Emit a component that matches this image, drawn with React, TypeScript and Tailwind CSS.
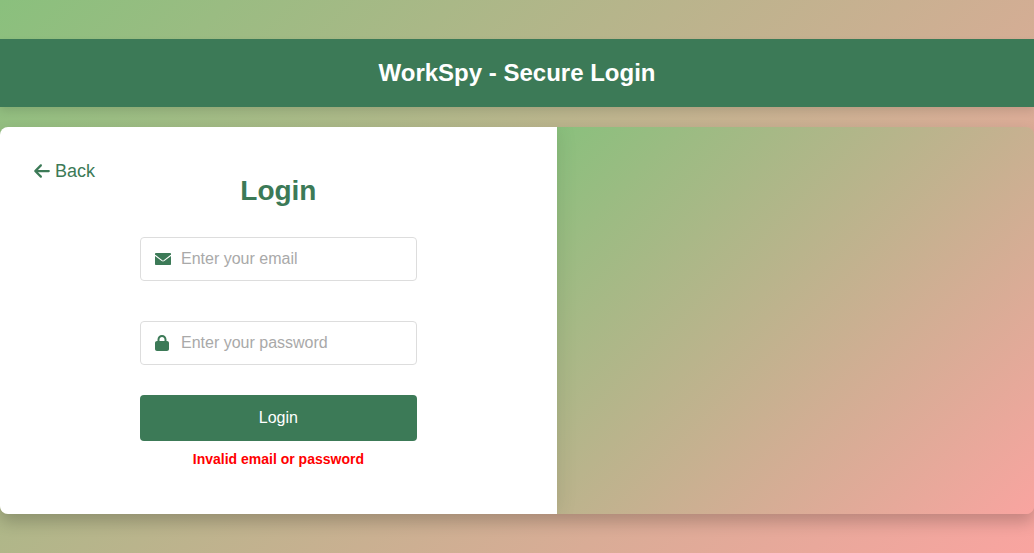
import { useState } from "react";
import type { ReactNode } from "react";
import { FaArrowLeft, FaLock } from "react-icons/fa6";

type FieldProps = {
  id: string;
  type: string;
  label: string;
  icon: ReactNode;
  value: string;
  onChange: (value: string) => void;
};

function EnvelopeIcon() {
  return (
    <svg viewBox="0 0 16 16" className="size-4" aria-hidden="true">
      <rect y="2" width="16" height="12" rx="0.8" fill="currentColor" />
      <path d="M0 4.2 L7 9.6 Q8 10.3 9 9.6 L16 4.2" fill="none" stroke="#ffffff" strokeWidth="1.1" />
    </svg>
  );
}

function Field({ id, type, label, icon, value, onChange }: FieldProps) {
  return (
    <div className="flex items-center rounded border border-[#dddddd] bg-white pl-3.5 pr-2.5 focus-within:border-[#3c7a57]">
      <label htmlFor={id} aria-label={label} className="flex w-[26px] shrink-0 text-base text-[#3c7a57]">
        {icon}
      </label>
      <input
        id={id}
        type={type}
        placeholder={label}
        value={value}
        onChange={(e) => onChange(e.target.value)}
        className="min-w-0 flex-1 bg-transparent py-[9px] text-base leading-6 text-[#333333] outline-none placeholder:text-[#a9a9a9]"
      />
    </div>
  );
}

export default function App() {
  const [email, setEmail] = useState("");
  const [password, setPassword] = useState("");

  return (
    <div className="flex min-h-screen flex-col justify-center bg-[linear-gradient(135deg,#8ac07d,#f9a4a0)] font-['Liberation_Sans',Arial,sans-serif]">
      <header className="bg-[#3c7a57] px-5 py-5 text-center shadow-[0_4px_8px_rgba(0,0,0,0.1)]">
        <h1 className="text-2xl leading-7 font-bold text-white">WorkSpy - Secure Login</h1>
      </header>

      <main className="mt-5 grid grid-cols-[7fr_6fr] overflow-hidden rounded-lg shadow-[0_8px_16px_rgba(0,0,0,0.2)]">
        <section className="z-10 bg-white pt-[34px] pb-[47px] shadow-[0_0_20px_rgba(0,0,0,0.1)]">
          <div className="grid px-[34px]">
            <a
              href="#back"
              className="col-start-1 row-start-1 flex items-center gap-[5px] self-start justify-self-start text-lg leading-5 text-[#3c7a57]"
            >
              <FaArrowLeft className="h-[18px] w-4" />
              Back
            </a>
            <h2 className="col-start-1 row-start-1 justify-self-center pt-3.5 text-[28px] leading-8 font-bold text-[#3c7a57]">
              Login
            </h2>
          </div>

          <form className="mt-[30px] flex flex-col px-[140px]" onSubmit={(e) => e.preventDefault()}>
            <div className="flex flex-col gap-10">
              <Field
                id="email"
                type="email"
                label="Enter your email"
                icon={<EnvelopeIcon />}
                value={email}
                onChange={setEmail}
              />
              <Field
                id="password"
                type="password"
                label="Enter your password"
                icon={<FaLock className="h-4 w-3.5" />}
                value={password}
                onChange={setPassword}
              />
            </div>
            <button
              type="submit"
              className="mt-[30px] cursor-pointer rounded bg-[#3c7a57] py-[11px] text-base text-white hover:bg-[#32684a]"
            >
              Login
            </button>
            <p role="alert" className="mt-2.5 text-center text-sm leading-4 font-bold text-[#ff0000]">
              Invalid email or password
            </p>
          </form>
        </section>
        <div className="bg-[linear-gradient(135deg,#8ac07d,#f9a4a0)]" />
      </main>
    </div>
  );
}
